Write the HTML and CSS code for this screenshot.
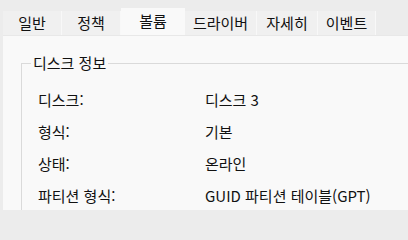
FILE: index.html
```html
<!DOCTYPE html>
<html lang="ko">
<head>
<meta charset="utf-8">
<link rel="stylesheet" href="styles.css">
</head>
<body>
<div class="dialog">
  <div class="tabs">
    <div class="tab w-general">일반</div>
    <div class="tab w-policy">정책</div>
    <div class="tab active w-volume">볼륨</div>
    <div class="tab w-driver">드라이버</div>
    <div class="tab w-detail">자세히</div>
    <div class="tab w-event">이벤트</div>
  </div>
  <div class="panel">
    <fieldset class="group">
      <legend>디스크 정보</legend>
      <div class="rows">
        <div class="row"><span class="label">디스크:</span><span class="value">디스크 3</span></div>
        <div class="row"><span class="label">형식:</span><span class="value">기본</span></div>
        <div class="row"><span class="label">상태:</span><span class="value">온라인</span></div>
        <div class="row"><span class="label">파티션 형식:</span><span class="value">GUID 파티션 테이블(GPT)</span></div>
      </div>
    </fieldset>
  </div>
</div>
</body>
</html>
```

FILE: styles.css
```css
html, body {
  margin: 0;
  padding: 0;
}
body {
  width: 408px;
  height: 210px;
  overflow: hidden;
  background: #ececec;
  font-family: "Noto Sans CJK KR", "Noto Sans", sans-serif;
  font-size: 15px;
  color: #111111;
}
.dialog {
  display: flex;
  flex-direction: column;
  height: 210px;
}
.tabs {
  display: flex;
  align-items: flex-end;
  height: 35px;
  padding-left: 3px;
}
.tab {
  height: 24px;
  box-sizing: border-box;
  background: #f0f0f0;
  border-right: 1px solid #f8f8f8;
  display: flex;
  align-items: center;
  justify-content: center;
  line-height: 16px;
}
.tab.active {
  height: 27px;
  background: #f9f9f9;
  border-right: none;
  padding-bottom: 2px;
}
.w-general { width: 59px; }
.w-policy { width: 59px; }
.w-volume { width: 64px; }
.w-driver { width: 72px; }
.w-detail { width: 61px; }
.w-event { width: 58px; }
.panel {
  flex: 1;
  margin-left: 3px;
  background: #f9f9f9;
  border-top: 1px solid #e8e8e8;
  overflow: hidden;
  padding-top: 19px;
}
.group {
  margin: 0 -30px 0 18px;
  padding: 0 0 0 9px;
  border: 1px solid #dadada;
  min-width: 0;
}
.group legend {
  padding: 0 2px;
  line-height: 16px;
}
.rows {
  padding: 12px 0 0 7px;
}
.row {
  display: flex;
  height: 32px;
  align-items: center;
}
.label {
  width: 167px;
}
```
